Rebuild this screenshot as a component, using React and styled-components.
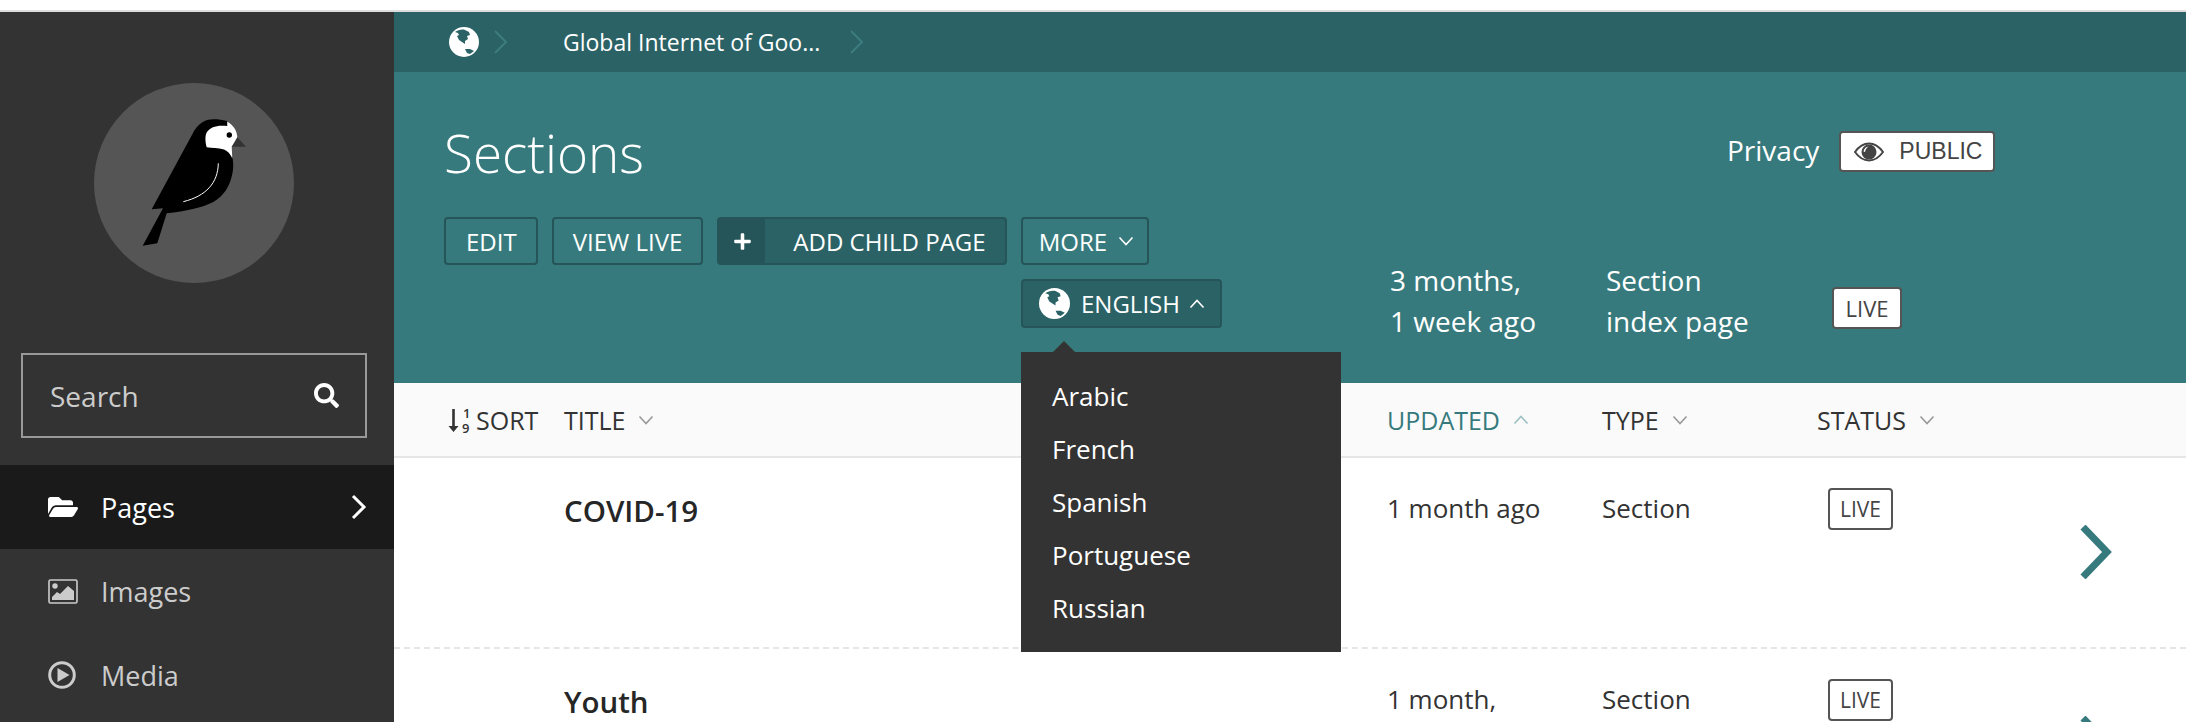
import React from "react";
import styled, { createGlobalStyle } from "styled-components";
import { FaFolderOpen, FaPlus, FaSearch } from "react-icons/fa";

const teal = "#377a7d";
const tealDark = "#2b6266";
const border = "#255558";

const GlobalStyle = createGlobalStyle`
  html, body { margin: 0; padding: 0; background: #fff; }
  body { font-family: "Open Sans", "Liberation Sans", sans-serif; color: #333; }
  * { box-sizing: border-box; }
`;

const Page = styled.div`
  height: 722px;
  overflow: hidden;
  display: flex;
  flex-direction: column;
`;

const TopStrip = styled.div`
  height: 12px;
  flex: none;
  border-bottom: 2px solid #ddd;
`;

const Shell = styled.div`
  flex: 1;
  display: flex;
  min-height: 0;
`;

const Sidebar = styled.aside`
  width: 394px;
  flex: none;
  background: #333;
  display: flex;
  flex-direction: column;
`;

const LogoWrap = styled.div`
  padding: 71px 6px 70px 0;
  display: flex;
  justify-content: center;
`;

const LogoCircle = styled.div`
  width: 200px;
  height: 200px;
  border-radius: 50%;
  background: #555;
`;

const SearchBox = styled.div`
  margin: 0 27px 27px 21px;
  height: 85px;
  border: 2px solid #999;
  display: flex;
  align-items: center;
  justify-content: space-between;
  padding: 0 26px 0 27px;
  color: #ccc;
  font-size: 28px;
  svg { color: #fff; font-size: 25px; }
`;

const NavItem = styled.div`
  height: 84px;
  display: flex;
  align-items: center;
  padding: 0 27px 0 48px;
  font-size: 27px;
  background: ${(p) => (p.$active ? "#1a1a1a" : "transparent")};
  color: ${(p) => (p.$active ? "#fff" : "#ccc")};
`;

const NavIcon = styled.span`
  width: 53px;
  display: flex;
  font-size: 30px;
`;

const NavLabel = styled.span`
  flex: 1;
`;

const Main = styled.main`
  flex: 1;
  min-width: 0;
  display: flex;
  flex-direction: column;
`;

const Breadcrumb = styled.nav`
  height: 60px;
  flex: none;
  background: ${tealDark};
  display: flex;
  align-items: center;
  padding-left: 55px;
  color: #fff;
  font-size: 23px;
`;

const CrumbChevron = styled.svg`
  width: 16px;
  height: 26px;
  flex: none;
  margin-left: ${(p) => p.$gap || "0"};
  fill: none;
  stroke: #3d7d80;
  stroke-width: 2;
`;

const CrumbText = styled.span`
  margin: 0 29px 0 54px;
`;

const Header = styled.header`
  height: 311px;
  flex: none;
  background: ${teal};
  display: flex;
  padding-left: 50px;
  color: #fff;
`;

const HeaderLeft = styled.div`
  width: 945px;
  flex: none;
`;

const Title = styled.h1`
  margin: 0;
  padding-top: 46px;
  height: 145px;
  font-size: 53px;
  line-height: 70px;
  font-weight: 300;
`;

const ButtonRow = styled.div`
  display: flex;
  gap: 14px;
`;

const LangRow = styled.div`
  position: relative;
  margin: 14px 0 0 577px;
`;

const Button = styled.div`
  height: 48px;
  display: inline-flex;
  align-items: center;
  padding: 0 ${(p) => p.$right || "19px"} 0 ${(p) => p.$left || "19px"};
  border: 2px solid ${border};
  border-radius: 4px;
  font-size: 24px;
  color: #fff;
  background: ${(p) => (p.$filled ? tealDark : "transparent")};
  overflow: hidden;
  white-space: nowrap;
`;

const PlusCap = styled.span`
  width: 46px;
  height: 100%;
  background: ${border};
  display: flex;
  align-items: center;
  justify-content: center;
  margin-right: 28px;
  font-size: 19px;
`;

const LangButton = styled(Button)`
  padding: 0 15px 0 16px;
  height: 49px;
`;

const Globe = styled.svg`
  flex: none;
  width: ${(p) => p.$size || "30px"};
  height: ${(p) => p.$size || "30px"};
  margin-right: ${(p) => p.$gap || "0"};
`;

const Caret = styled.svg`
  width: 16px;
  height: 10px;
  margin-left: ${(p) => p.$gap || "13px"};
  flex: none;
  fill: none;
  stroke: ${(p) => p.$color || "currentColor"};
  stroke-width: 1.6;
`;

const Dropdown = styled.ul`
  position: absolute;
  z-index: 5;
  left: 0;
  top: 73px;
  width: 320px;
  height: 300px;
  margin: 0;
  padding: 18px 0 0 31px;
  list-style: none;
  background: #333;
  color: #fff;
  font-size: 26px;
  &::before {
    content: "";
    position: absolute;
    top: -11px;
    left: 32px;
    border: solid transparent;
    border-width: 0 11px 11px;
    border-bottom-color: #333;
  }
`;

const DropdownItem = styled.li`
  height: 53px;
  line-height: 53px;
`;

const HeaderRight = styled.div`
  flex: 1;
`;

const PrivacyRow = styled.div`
  display: flex;
  align-items: flex-start;
  gap: 20px;
  padding: 57px 0 0 338px;
  height: 188px;
  font-size: 28px;
`;

const PrivacyLabel = styled.span`
  line-height: 42px;
`;

const PublicTag = styled.div`
  width: 156px;
  height: 41px;
  margin-top: 2px;
  background: #fff;
  border: 2px solid #555;
  border-radius: 4px;
  color: #444;
  font-family: "Liberation Sans", sans-serif;
  font-size: 23px;
  display: flex;
  align-items: center;
  padding-left: 13px;
`;

const EyeIcon = styled.svg`
  width: 30px;
  height: 20px;
  margin-right: 15px;
  flex: none;
`;

const MetaGrid = styled.div`
  display: grid;
  grid-template-columns: 216px 226px auto;
  align-items: center;
  justify-content: start;
  padding-left: 1px;
  font-size: 28px;
  line-height: 41px;
`;

const LiveTag = styled.div`
  display: flex;
  align-items: center;
  justify-content: center;
  width: ${(p) => (p.$large ? "70px" : "65px")};
  height: 42px;
  background: ${(p) => (p.$large ? "#fff" : "transparent")};
  border: 2px solid #555;
  border-radius: 4px;
  color: #444;
  font-size: ${(p) => (p.$large ? "22px" : "21px")};
  margin-top: ${(p) => (p.$large ? "14px" : "0")};
`;

const columns = "170px 823px 215px 215px 263px 1fr";

const TableHead = styled.div`
  height: 75px;
  flex: none;
  display: grid;
  grid-template-columns: ${columns};
  align-items: center;
  background: #fafafa;
  border-bottom: 2px solid #e6e6e6;
  font-size: 25px;
  color: #333;
`;

const HeadCell = styled.div`
  display: flex;
  align-items: center;
  color: ${(p) => (p.$active ? teal : "#333")};
  padding-left: ${(p) => p.$pad || 0};
`;

const SortIcon = styled.svg`
  width: 27px;
  height: 38px;
  flex: none;
  margin-right: 1px;
  fill: #333;
  text {
    font-family: "Open Sans", sans-serif;
    font-size: 13px;
    font-weight: 600;
  }
`;

const Row = styled.div`
  height: 191px;
  flex: none;
  display: grid;
  grid-template-columns: ${columns};
  align-items: start;
  padding-top: 30px;
  border-bottom: 2px dashed #e6e6e6;
  font-size: 26px;
  line-height: 40px;
`;

const RowTitle = styled.div`
  grid-column: 2;
  padding-top: 3px;
  font-weight: 600;
  font-size: 29.5px;
  color: #262626;
`;

const StatusCell = styled.div`
  padding-left: 11px;
`;

const RowChevron = styled.svg`
  width: 32px;
  height: 54px;
  margin-top: 37px;
  fill: none;
  stroke: ${teal};
  stroke-width: 7;
`;

const Bird = () => (
  <svg width="200" height="200" viewBox="0 0 200 200">
    <path
      d="M48.7 162.7 L63.3 160.3 L72.7 130.3 C92 128 108 125 119.3 119 C130 113 136 103 138.5 90 C140 82 139 77 137.7 71 L133 38 C125 36 118 36 113 37 C107 39 102 44 99 50 L57.7 126.3 L69 125.3 Z"
      fill="#000"
    />
    <path
      d="M133.3 38.7 C139 42 143 47 143.3 54 C143 58 140 61 137.7 63.7 L138.3 75.3 C136 71 134 68 130 66.5 C124 65 118 65 112.7 64.3 C111 58 111 52 113 49 C117 44 122 42 133.3 43 Z"
      fill="#fff"
    />
    <path d="M137.7 63.7 L152 63.7 L143.3 54.3 Z" fill="#333" />
    <circle cx="135.3" cy="52" r="2.7" fill="#000" />
    <path d="M124.3 80.3 C124 100 112 113 89.3 118.7" fill="none" stroke="#fff" strokeWidth="1" />
  </svg>
);

const GlobeIcon = ({ size, gap }) => (
  <Globe viewBox="0 0 30 30" $size={size} $gap={gap}>
    <circle cx="15" cy="15" r="15" fill="#fff" />
    <path
      d="M6 5 C9 3 13 2 16 3 L20 5 L21 8 L18 9 L19 12 L16 14 L16 17 L13 15 L10 13 L8 9 L10 8 L9 6 Z"
      fill={tealDark}
    />
    <path d="M16 22 L21 22 L25 24 L21 27 L18 26 Z" fill={tealDark} />
  </Globe>
);

const ImageIcon = () => (
  <svg width="30" height="25" viewBox="0 0 30 25">
    <rect x="1" y="1" width="28" height="23" rx="1.5" fill="none" stroke="#ccc" strokeWidth="1.6" />
    <circle cx="7" cy="7" r="2.7" fill="#ccc" />
    <path d="M4 21 L4 18 L9 13 L12 15 L20 7 L26 12 L26 21 Z" fill="#ccc" />
  </svg>
);

const PlayIcon = () => (
  <svg width="28" height="28" viewBox="0 0 28 28">
    <circle cx="14" cy="14" r="12.3" fill="none" stroke="#ccc" strokeWidth="3" />
    <path d="M9.5 7 L21.5 14 L9.5 21 Z" fill="#ccc" />
  </svg>
);

const Eye = () => (
  <EyeIcon viewBox="0 0 30 20">
    <path d="M1 10 C6 3 10 1.5 15 1.5 C20 1.5 24 3 29 10 C24 17 20 18.5 15 18.5 C10 18.5 6 17 1 10 Z" fill="none" stroke="#444" strokeWidth="2" />
    <circle cx="15" cy="10" r="7.5" fill="#444" />
    <path d="M9.5 9.5 C10 6.5 12 5 14.5 4.6 C12.8 6 11.5 7.5 11 10 Z" fill="#fff" />
  </EyeIcon>
);

const ChevronDown = ({ color, gap }) => (
  <Caret viewBox="0 0 16 10" $color={color} $gap={gap}>
    <path d="M1.5 1.5 L8 8.5 L14.5 1.5" />
  </Caret>
);

const ChevronUp = ({ color, gap }) => (
  <Caret viewBox="0 0 16 10" $color={color} $gap={gap}>
    <path d="M1.5 8.5 L8 1.5 L14.5 8.5" />
  </Caret>
);

const rows = [
  { title: "COVID-19", updated: "1 month ago" },
  { title: "Youth", updated: "1 month," },
];

const languages = ["Arabic", "French", "Spanish", "Portuguese", "Russian"];

export default function App() {
  return (
    <Page>
      <GlobalStyle />
      <TopStrip />
      <Shell>
        <Sidebar>
          <LogoWrap>
            <LogoCircle>
              <Bird />
            </LogoCircle>
          </LogoWrap>
          <SearchBox>
            Search
            <FaSearch />
          </SearchBox>
          <NavItem $active>
            <NavIcon><FaFolderOpen /></NavIcon>
            <NavLabel>Pages</NavLabel>
            <svg width="16" height="26" viewBox="0 0 16 26" fill="none" stroke="#fff" strokeWidth="3">
              <path d="M2 2 L13 13 L2 24" />
            </svg>
          </NavItem>
          <NavItem>
            <NavIcon><ImageIcon /></NavIcon>
            <NavLabel>Images</NavLabel>
          </NavItem>
          <NavItem>
            <NavIcon><PlayIcon /></NavIcon>
            <NavLabel>Media</NavLabel>
          </NavItem>
        </Sidebar>

        <Main>
          <Breadcrumb>
            <GlobeIcon />
            <CrumbChevron viewBox="0 0 16 26" $gap="14px">
              <path d="M2 2 L13 13 L2 24" />
            </CrumbChevron>
            <CrumbText>Global Internet of Goo...</CrumbText>
            <CrumbChevron viewBox="0 0 16 26">
              <path d="M2 2 L13 13 L2 24" />
            </CrumbChevron>
          </Breadcrumb>

          <Header>
            <HeaderLeft>
              <Title>Sections</Title>
              <ButtonRow>
                <Button $left="20px">EDIT</Button>
                <Button>VIEW LIVE</Button>
                <Button $filled $left="0">
                  <PlusCap><FaPlus /></PlusCap>
                  ADD CHILD PAGE
                </Button>
                <Button $left="16px" $right="13px">
                  MORE
                  <ChevronDown gap="11px" />
                </Button>
              </ButtonRow>
              <LangRow>
                <LangButton $filled>
                  <GlobeIcon size="31px" gap="11px" />
                  ENGLISH
                  <ChevronUp gap="9px" />
                </LangButton>
                <Dropdown>
                  {languages.map((lang) => (
                    <DropdownItem key={lang}>{lang}</DropdownItem>
                  ))}
                </Dropdown>
              </LangRow>
            </HeaderLeft>

            <HeaderRight>
              <PrivacyRow>
                <PrivacyLabel>Privacy</PrivacyLabel>
                <PublicTag>
                  <Eye />
                  PUBLIC
                </PublicTag>
              </PrivacyRow>
              <MetaGrid>
                <div>3 months,<br />1 week ago</div>
                <div>Section<br />index page</div>
                <LiveTag $large>LIVE</LiveTag>
              </MetaGrid>
            </HeaderRight>
          </Header>

          <TableHead>
            <HeadCell $pad="54px">
              <SortIcon viewBox="0 -5 27 38">
                <path d="M4.2 3 L6.8 3 L6.8 20 L10.5 20 L5.5 26 L0.5 20 L4.2 20 Z" />
                <text x="15" y="12">1</text>
                <text x="14" y="27">9</text>
              </SortIcon>
              SORT
            </HeadCell>
            <HeadCell>
              TITLE
              <ChevronDown color="#999" />
            </HeadCell>
            <HeadCell $active>
              UPDATED
              <ChevronUp color="#9cc0c1" />
            </HeadCell>
            <HeadCell>
              TYPE
              <ChevronDown color="#999" />
            </HeadCell>
            <HeadCell>
              STATUS
              <ChevronDown color="#999" />
            </HeadCell>
          </TableHead>

          {rows.map((row) => (
            <Row key={row.title}>
              <RowTitle>{row.title}</RowTitle>
              <div>{row.updated}</div>
              <div>Section</div>
              <StatusCell>
                <LiveTag>LIVE</LiveTag>
              </StatusCell>
              <RowChevron viewBox="0 0 32 54">
                <path d="M3 2 L27 27 L3 52" />
              </RowChevron>
            </Row>
          ))}
        </Main>
      </Shell>
    </Page>
  );
}
